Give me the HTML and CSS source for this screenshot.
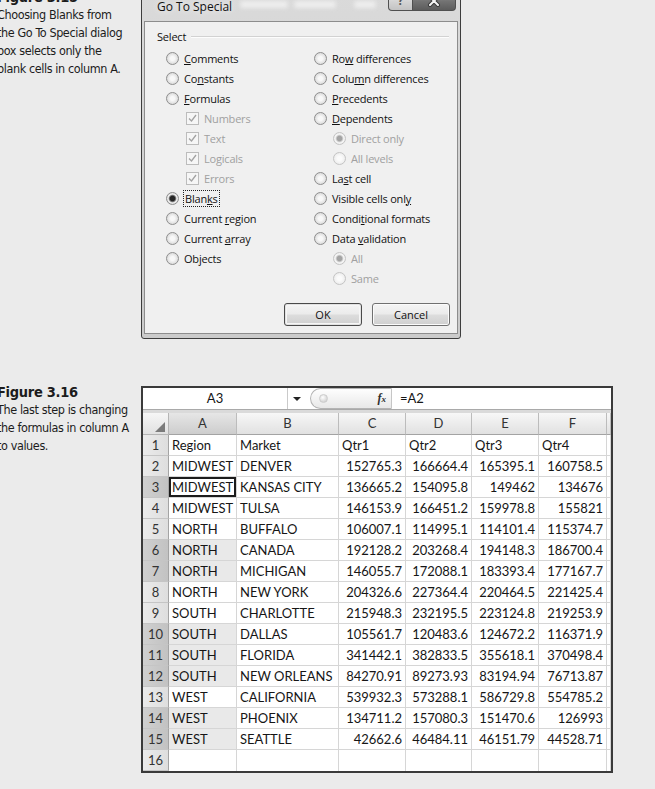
FILE: index.html
```html
<!DOCTYPE html>
<html lang="en">
<head>
  <meta charset="UTF-8">
  <meta name="viewport" content="width=device-width, initial-scale=1.0">
  <title>Go To Special: Blanks</title>
  <link rel="stylesheet" href="styles.css">
</head>
<body>
  <div class="page">
    <section class="figure">
      <div class="caption">
        <h2 class="caption-title">Figure 3.15</h2>
        <p class="caption-text">Choosing Blanks from<br>the Go To Special dialog<br>box selects only the<br>blank cells in column A.</p>
      </div>
      <div class="dialog">
        <div class="titlebar">
          <span class="title">Go To Special</span>
          <span class="title-haze"><i></i><i></i><i></i></span>
          <span class="caption-btns">
            <span class="cbtn help">?</span>
            <span class="cbtn close">
              <svg viewBox="0 0 14 12" width="14" height="12"><path d="M3 2l8 8M11 2l-8 8" stroke="#3a3a3a" stroke-width="4" stroke-linecap="round"/><path d="M3 2l8 8M11 2l-8 8" stroke="#f4f4f4" stroke-width="2" stroke-linecap="round"/></svg>
            </span>
          </span>
        </div>
        <div class="client">
          <div class="group-label"><span>Select</span></div>
          <div class="options">
            <div class="col">
              <div class="opt"><span class="radio"></span><span><u>C</u>omments</span></div>
              <div class="opt"><span class="radio"></span><span>Co<u>n</u>stants</span></div>
              <div class="opt"><span class="radio"></span><span><u>F</u>ormulas</span></div>
              <div class="opt sub off"><span class="check"><svg viewBox="0 0 11 11" width="11" height="11"><path d="M2 5.5l2.5 2.5L9 2" fill="none" stroke="#a3a3a3" stroke-width="1.3"/></svg></span><span>Numbers</span></div>
              <div class="opt sub off"><span class="check"><svg viewBox="0 0 11 11" width="11" height="11"><path d="M2 5.5l2.5 2.5L9 2" fill="none" stroke="#a3a3a3" stroke-width="1.3"/></svg></span><span>Text</span></div>
              <div class="opt sub off"><span class="check"><svg viewBox="0 0 11 11" width="11" height="11"><path d="M2 5.5l2.5 2.5L9 2" fill="none" stroke="#a3a3a3" stroke-width="1.3"/></svg></span><span>Logicals</span></div>
              <div class="opt sub off"><span class="check"><svg viewBox="0 0 11 11" width="11" height="11"><path d="M2 5.5l2.5 2.5L9 2" fill="none" stroke="#a3a3a3" stroke-width="1.3"/></svg></span><span>Errors</span></div>
              <div class="opt"><span class="radio on"></span><span class="focus">Blan<u>k</u>s</span></div>
              <div class="opt"><span class="radio"></span><span>Current <u>r</u>egion</span></div>
              <div class="opt"><span class="radio"></span><span>Current <u>a</u>rray</span></div>
              <div class="opt"><span class="radio"></span><span>Ob<u>j</u>ects</span></div>
            </div>
            <div class="col col-right">
              <div class="opt"><span class="radio"></span><span>Ro<u>w</u> differences</span></div>
              <div class="opt"><span class="radio"></span><span>Colu<u>m</u>n differences</span></div>
              <div class="opt"><span class="radio"></span><span><u>P</u>recedents</span></div>
              <div class="opt"><span class="radio"></span><span><u>D</u>ependents</span></div>
              <div class="opt sub off"><span class="radio on"></span><span>Direct only</span></div>
              <div class="opt sub off"><span class="radio"></span><span>All levels</span></div>
              <div class="opt"><span class="radio"></span><span>La<u>s</u>t cell</span></div>
              <div class="opt"><span class="radio"></span><span>Visible cells onl<u>y</u></span></div>
              <div class="opt"><span class="radio"></span><span>Condi<u>t</u>ional formats</span></div>
              <div class="opt"><span class="radio"></span><span>Data <u>v</u>alidation</span></div>
              <div class="opt sub off"><span class="radio on"></span><span>All</span></div>
              <div class="opt sub off"><span class="radio"></span><span>Same</span></div>
            </div>
          </div>
          <div class="actions">
            <button class="btn default">OK</button>
            <button class="btn">Cancel</button>
          </div>
        </div>
      </div>
    </section>

    <section class="figure">
      <div class="caption">
        <h2 class="caption-title">Figure 3.16</h2>
        <p class="caption-text">The last step is changing<br>the formulas in column A<br>to values.</p>
      </div>
      <div class="sheet">
        <div class="formula-bar">
          <div class="name-box">A3</div>
          <div class="name-drop"></div>
          <div class="fx-group"><span class="fx-dot"></span><span class="fx">f<small>x</small></span></div>
          <div class="formula">=A2</div>
        </div>
        <div class="sheet-gap"></div>
        <div class="grid" id="grid"></div>
      </div>
    </section>
  </div>

  <script>
    const rows=[
      ['Region','Market','Qtr1','Qtr2','Qtr3','Qtr4'],
      ['MIDWEST','DENVER',152765.3,166664.4,165395.1,160758.5],
      ['MIDWEST','KANSAS CITY',136665.2,154095.8,149462,134676],
      ['MIDWEST','TULSA',146153.9,166451.2,159978.8,155821],
      ['NORTH','BUFFALO',106007.1,114995.1,114101.4,115374.7],
      ['NORTH','CANADA',192128.2,203268.4,194148.3,186700.4],
      ['NORTH','MICHIGAN',146055.7,172088.1,183393.4,177167.7],
      ['NORTH','NEW YORK',204326.6,227364.4,220464.5,221425.4],
      ['SOUTH','CHARLOTTE',215948.3,232195.5,223124.8,219253.9],
      ['SOUTH','DALLAS',105561.7,120483.6,124672.2,116371.9],
      ['SOUTH','FLORIDA',341442.1,382833.5,355618.1,370498.4],
      ['SOUTH','NEW ORLEANS',84270.91,89273.93,83194.94,76713.87],
      ['WEST','CALIFORNIA',539932.3,573288.1,586729.8,554785.2],
      ['WEST','PHOENIX',134711.2,157080.3,151470.6,126993],
      ['WEST','SEATTLE',42662.6,46484.11,46151.79,44528.71],
      []
    ];
    // rows whose column A cell is in the current selection; A3 is the active cell
    const picked=[3,6,7,10,11,12,14,15],active=3;
    const grid=document.getElementById('grid');
    function cell(cls,text){const d=document.createElement('div');d.className=cls;d.textContent=text;grid.append(d);return d;}
    const corner=cell('corner','');const tri=document.createElement('span');tri.className='tri';corner.append(tri);
    ['A','B','C','D','E','F'].forEach((l,i)=>cell(i===0?'ch on':'ch',l));
    cell('ch fill','');
    rows.forEach((r,i)=>{
      const n=i+1,on=picked.includes(n);
      cell(on?'rh on':'rh',n);
      for(let j=0;j<6;j++){
        const v=r[j];let cls='c';
        if(typeof v==='number')cls+=' num';
        if(j===0&&on)cls+=n===active?' active':' pick';
        cell(cls,v===undefined?'':v);
      }
      cell('c fill','');
    });
  </script>
</body>
</html>
```

FILE: styles.css
```css
:root{--page:#ebebeb;--face:#f0f0f0;--grid:#d6d6d6;--ui:'Open Sans','Noto Sans',sans-serif;--cell:Lato,'Open Sans',sans-serif;--cap:'DejaVu Sans Condensed','DejaVu Sans',sans-serif}
html,body{margin:0;padding:0}
body{background:var(--page);color:#1a1a1a;overflow:hidden}
.page{margin-top:-12px}
.figure{display:flex;align-items:flex-start}
.figure+.figure{margin-top:44px}
.caption{flex:0 0 144px;margin-left:-3px;font-family:var(--cap);font-stretch:condensed;line-height:18px;color:#1c1c1c;white-space:nowrap;overflow:hidden}
.caption-title{margin:0;font-size:14.5px;font-weight:bold;letter-spacing:-.3px}
.caption-text{margin:0;font-size:12.5px;letter-spacing:-.4px}

/* dialog window */
.dialog{margin-top:2px;width:320px;box-sizing:border-box;border:1px solid #3d3d3d;border-radius:6px 6px 3px 3px;background:linear-gradient(#dadada,#cbcbcb);padding:0 2px 4px;font-family:var(--ui);font-size:11px;letter-spacing:-.2px;color:#111}
.titlebar{display:flex;align-items:flex-start;height:30px}
.title{margin:8px 0 0 13px;font-size:12px;line-height:16px;letter-spacing:0;color:#111;text-shadow:0 0 6px #f4f4f4}
.title-haze{flex:1;display:flex;gap:6px;margin:10px 6px 0 8px;filter:blur(2px)}
.title-haze i{height:7px;background:#eeeeee;border-radius:3px}
.title-haze i:nth-child(1){width:48px}
.title-haze i:nth-child(2){width:42px}
.title-haze i:nth-child(3){width:22px;margin-left:12px}
.caption-btns{display:flex;margin-right:2px}
.cbtn{height:20px;box-sizing:border-box;border:1px solid #4f4f4f;border-top:0;display:flex;align-items:center;justify-content:center}
.cbtn.help{width:25px;border-radius:0 0 0 4px;background:linear-gradient(#f4f4f4,#d4d4d4 55%,#c3c3c3);color:#555;font:bold 12px var(--ui)}
.cbtn.close{width:43px;border-left:0;border-radius:0 0 4px 0;background:linear-gradient(#a0a0a0,#727272 55%,#5c5c5c)}
.client{border:1px solid #8d8d8d;background:var(--face);padding:7px 0}
.group-label{display:flex;align-items:center;gap:5px;padding:0 8px 0 12px;line-height:16px}
.group-label::after{content:"";flex:1;margin-top:-2px;border-top:1px solid #d2d2d2;box-shadow:0 1px 0 #fdfdfd}
.options{display:grid;grid-template-columns:148px 1fr;margin-top:3px;padding-left:21px}
.col{display:flex;flex-direction:column}
.opt{display:flex;align-items:center;gap:5px;height:20px;white-space:nowrap}
.opt.sub{padding-left:20px}
.col-right .opt.sub{padding-left:19px}
.opt.off{color:#a0a0a0}
.opt u{text-underline-offset:1px}
.radio{flex:none;width:13px;height:13px;box-sizing:border-box;border-radius:50%;border:1px solid #8e8e8e;background:radial-gradient(circle,#f8f8f8 0 2px,#d9d9d9 6px)}
.radio.on{background:radial-gradient(circle,#262626 0 2.3px,#7d7d7d 3.3px,#f2f2f2 4.3px,#d6d6d6 6px)}
.opt.off .radio{border-color:#c4c4c4;background:radial-gradient(circle,#fbfbfb 0 2px,#ececec 6px)}
.opt.off .radio.on{background:radial-gradient(circle,#a4a4a4 0 2.3px,#cfcfcf 3.3px,#f6f6f6 4.3px,#ececec 6px)}
.check{flex:none;width:13px;height:13px;box-sizing:border-box;border:1px solid #bcbcbc;background:#f6f6f6;display:flex;align-items:center;justify-content:center}
.focus{outline:1px dotted #222;padding:0 1px;line-height:15px}
.actions{display:flex;justify-content:flex-end;gap:10px;margin-top:15px;padding-right:7px}
.btn{width:78px;height:23px;box-sizing:border-box;border:1px solid #707070;border-radius:3px;background:linear-gradient(#f5f5f5,#ebebeb 48%,#dddddd 52%,#cfcfcf);box-shadow:inset 0 0 0 1px #fbfbfb;font:inherit;color:#111;padding:0}
.btn.default{border-color:#4a4a4a;box-shadow:inset 0 0 0 1px #e2e2e2,inset 0 0 0 2px #f6f6f6}

/* worksheet */
.sheet{margin-top:3px;width:472px;box-sizing:border-box;border:2px solid #3a3a3a;background:#fff;font-family:var(--cell);font-size:13px;color:#161616}
.formula-bar{display:flex;height:22px;box-sizing:border-box;border-bottom:1px solid #a9a9a9}
.name-box{width:145px;box-sizing:border-box;border-right:1px solid #cacaca;text-align:center;line-height:21px}
.name-drop{width:18px;display:flex;align-items:center;justify-content:center}
.name-drop::before{content:"";border:4px solid transparent;border-top:4px solid #222;border-bottom:0}
.fx-group{width:82px;margin-left:4px;display:flex;align-items:center;justify-content:space-between;padding:0 5px 0 8px;box-sizing:border-box;border:1px solid #b4b4b4;border-right-color:#c6c6c6;border-radius:11px 0 0 11px;background:linear-gradient(#fefefe,#e8e8e8)}
.fx-dot{width:9px;height:9px;box-sizing:border-box;border-radius:50%;border:1px solid #cdcdcd;background:radial-gradient(circle at 40% 35%,#fff,#c4c4c4)}
.fx{font:italic bold 12px 'Liberation Serif',serif;color:#2e2e2e}
.fx small{font-size:9px}
.formula{flex:1;padding-left:8px;line-height:21px}
.sheet-gap{height:3px;background:#dadada}
.grid{display:grid;grid-template-columns:26px 68px 102px 67px 66px 67px 68px 1fr;grid-template-rows:22px;grid-auto-rows:21px}
.grid>div{box-sizing:border-box;border-right:1px solid var(--grid);border-bottom:1px solid var(--grid);padding:0 3px;line-height:20px;white-space:nowrap;overflow:hidden}
.grid>.corner{display:flex;align-items:flex-end;justify-content:flex-end;padding:0 3px 2px 0;background:linear-gradient(#f6f6f6,#e1e1e1);border-color:#b5b5b5}
.tri{width:10px;height:10px;background:#7b7b7b;clip-path:polygon(100% 0,100% 100%,0 100%)}
.grid>.ch{text-align:center;line-height:21px;color:#333;background:linear-gradient(#f7f7f7,#e1e1e1);border-right-color:#bcbcbc;border-bottom-color:#a3a3a3}
.grid>.ch.on{background:linear-gradient(#e6e6e6,#cdcdcd)}
.grid>.rh{padding:0;text-align:center;color:#333;background:linear-gradient(90deg,#ebebeb,#dedede);border-right-color:#a4a4a4;border-bottom-color:#c5c5c5}
.grid>.rh.on{background:linear-gradient(90deg,#d0d0d0,#c2c2c2)}
.grid>.num{text-align:right}
.grid>.pick{background:#e9e9e9}
.grid>.active{background:#fff;box-shadow:inset 0 0 0 2px #1c1c1c}
.grid>.fill{padding:0}
.grid>.c:nth-last-child(-n+8){border-bottom:0}
```
